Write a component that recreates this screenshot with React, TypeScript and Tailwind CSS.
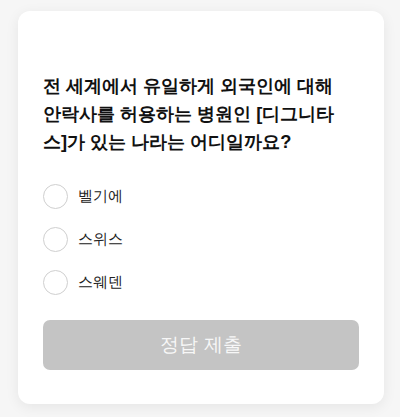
const options = ['벨기에', '스위스', '스웨덴'];

export default function App() {
  return (
    <div className="min-h-[417px] bg-[#f6f6f6] pt-[11px] pl-[18px] font-[family-name:sans-serif]">
      <div className="w-[366px] h-[393px] bg-white rounded-[12px] shadow-[0_3px_14px_rgba(0,0,0,0.07)] px-[25px] pt-[61px]">
        <h2 className="pr-[8px] text-[18.3px] leading-[28px] font-bold text-[#111]">
          전 세계에서 유일하게 외국인에 대해 안락사를 허용하는 병원인 [디그니타스]가 있는 나라는 어디일까요?
        </h2>

        <div className="mt-[28px] flex flex-col gap-[18px]">
          {options.map((opt) => (
            <label key={opt} className="flex items-center gap-[10px] h-[25px]">
              <span className="w-[25px] h-[25px] rounded-full border-[1.5px] border-[#cfcfcf] bg-white" />
              <span className="text-[15px] text-[#222]">{opt}</span>
            </label>
          ))}
        </div>

        <button className="mt-[25px] w-full h-[50px] rounded-[7px] bg-[#c4c4c4] text-[19px] text-[#f7f7f7]">
          정답 제출
        </button>
      </div>
    </div>
  );
}
